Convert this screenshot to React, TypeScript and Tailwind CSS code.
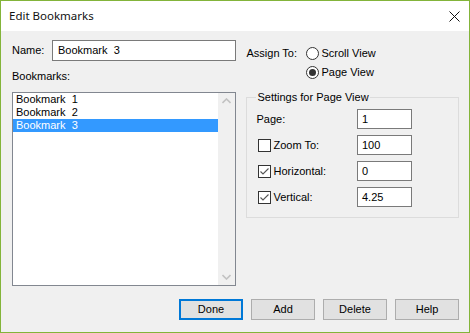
import React from 'react';

const font = { fontFamily: '"Liberation Sans", Arial, sans-serif' };

function Radio({ checked, label }: { checked: boolean; label: string }) {
  return (
    <div className="flex items-center h-[13px]">
      <span className="w-[13px] h-[13px] rounded-full border border-[#333] bg-white flex items-center justify-center">
        {checked && <span className="w-[7px] h-[7px] rounded-full bg-[#333]" />}
      </span>
      <span className="ml-[2px]">{label}</span>
    </div>
  );
}

function Check({ checked, label }: { checked: boolean; label: string }) {
  return (
    <div className="flex items-center ml-[2px]">
      <span className="w-[13px] h-[13px] border border-[#333] bg-white flex items-center justify-center">
        {checked && (
          <svg width="11" height="11" viewBox="0 0 11 11">
            <path d="M1.5 5.5 L4 8 L9.5 2.5" stroke="#555" strokeWidth="1.1" fill="none" />
          </svg>
        )}
      </span>
      <span className="ml-[2px]">{label}</span>
    </div>
  );
}

function Field({ value }: { value: string }) {
  return (
    <div className="w-[55px] h-[20px] border border-[#7a7a7a] bg-white flex items-center pl-[4px] whitespace-pre">
      {value}
    </div>
  );
}

function Button({ label, primary }: { label: string; primary?: boolean }) {
  return (
    <button
      className={`w-[64px] h-[21px] bg-[#e1e1e1] text-black ${
        primary ? 'border-2 border-[#0078d7]' : 'border border-[#adadad]'
      }`}
    >
      {label}
    </button>
  );
}

export default function App() {
  const bookmarks = ['Bookmark  1', 'Bookmark  2', 'Bookmark  3'];

  return (
    <div
      className="w-[470px] h-[333px] border border-[#83b43a] bg-[#f0f0f0] flex flex-col text-[11px] text-black"
      style={font}
    >
      {/* Title bar */}
      <div className="h-[30px] bg-white flex items-center justify-between pl-[8px] pr-[9px]">
        <span className="text-[11.5px] text-[#111]" style={{ fontFamily: '"Noto Sans", "Open Sans", sans-serif' }}>
          Edit Bookmarks
        </span>
        <svg width="11" height="11" viewBox="0 0 11 11">
          <path d="M0.5 0.5 L10.5 10.5 M10.5 0.5 L0.5 10.5" stroke="#111" strokeWidth="1" />
        </svg>
      </div>

      <div className="flex-1 flex flex-col pl-[11px] pr-[10px] pt-[9px]">
        <div className="flex">
          {/* Left column */}
          <div className="w-[225px] flex flex-col">
            <div className="flex items-center h-[21px]">
              <span className="w-[40px]">Name:</span>
              <div className="flex-1 h-[21px] border border-[#7a7a7a] bg-white flex items-center pl-[5px] whitespace-pre">
                Bookmark  3
              </div>
            </div>
            <div className="mt-[9px] h-[13px] leading-[13px]">Bookmarks:</div>
            <div className="mt-[9px] h-[194px] border border-[#828790] bg-white flex">
              <div className="flex-1 flex flex-col">
                {bookmarks.map((b, i) => (
                  <div
                    key={b}
                    className={`h-[13px] leading-[13px] pl-[3px] whitespace-pre ${
                      i === 2 ? 'bg-[#3399ff] text-white' : ''
                    }`}
                  >
                    {b}
                  </div>
                ))}
              </div>
              <div className="w-[17px] bg-[#f0f0f0] flex flex-col justify-between items-center py-[5px]">
                <svg width="9" height="6" viewBox="0 0 9 6">
                  <path d="M0.5 5 L4.5 1 L8.5 5" stroke="#c2c2c2" strokeWidth="1.6" fill="none" />
                </svg>
                <svg width="9" height="6" viewBox="0 0 9 6">
                  <path d="M0.5 1 L4.5 5 L8.5 1" stroke="#c2c2c2" strokeWidth="1.6" fill="none" />
                </svg>
              </div>
            </div>
          </div>

          {/* Right column */}
          <div className="ml-[10px] w-[213px] flex flex-col">
            <div className="flex pt-[7px]">
              <span className="w-[60px] h-[13px] leading-[13px]">Assign To:</span>
              <div className="flex flex-col gap-[6px]">
                <Radio checked={false} label="Scroll View" />
                <Radio checked label="Page View" />
              </div>
            </div>

            <fieldset className="mt-[12px] border border-[#dcdcdc] pl-[9px] pr-[8px] pb-[10px] pt-[5px]">
              <legend className="px-[1px] h-[13px] leading-[13px]">Settings for Page View</legend>
              <div className="flex flex-col gap-[6px]">
                <div className="flex items-center justify-between pr-[38px]">
                  <span>Page:</span>
                  <Field value="1" />
                </div>
                <div className="flex items-center justify-between pr-[38px]">
                  <Check checked={false} label="Zoom To:" />
                  <Field value="100" />
                </div>
                <div className="flex items-center justify-between pr-[38px]">
                  <Check checked label="Horizontal:" />
                  <Field value="0" />
                </div>
                <div className="flex items-center justify-between pr-[38px]">
                  <Check checked label="Vertical:" />
                  <Field value="4.25" />
                </div>
              </div>
            </fieldset>
          </div>
        </div>

        <div className="mt-[13px] flex justify-end gap-[8px]">
          <Button label="Done" primary />
          <Button label="Add" />
          <Button label="Delete" />
          <Button label="Help" />
        </div>
      </div>
    </div>
  );
}
